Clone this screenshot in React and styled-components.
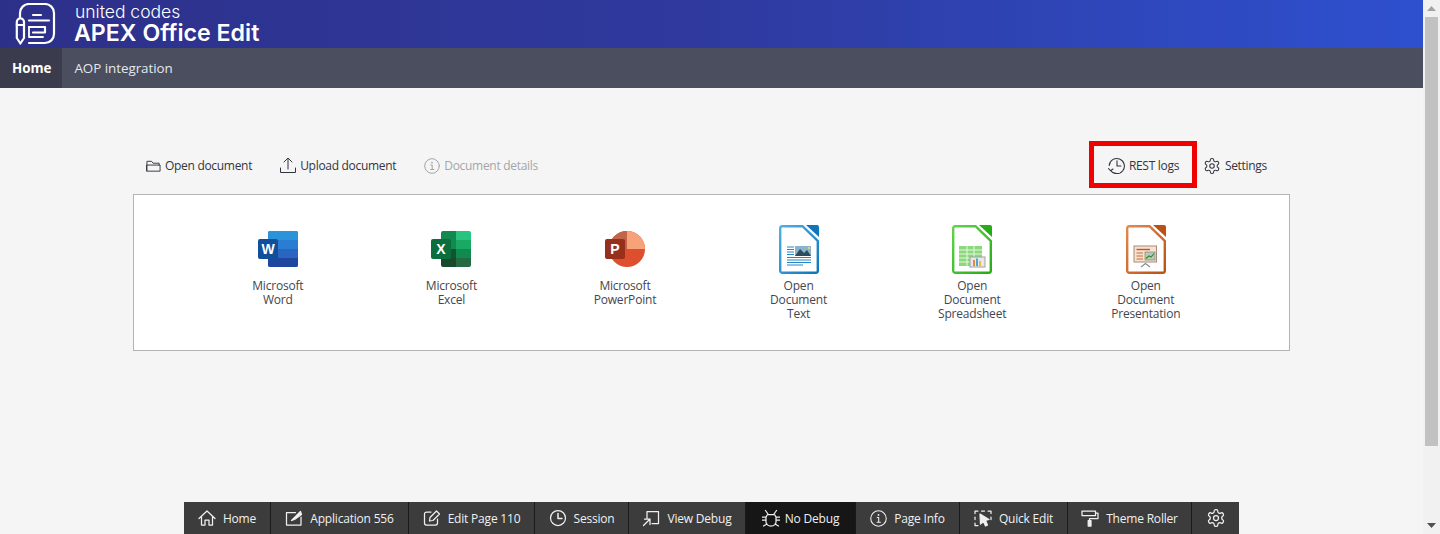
import React from 'react'
import styled, { createGlobalStyle } from 'styled-components'

const Global = createGlobalStyle`
html, body { margin: 0; padding: 0; height: 100%; overflow: hidden; background: #f5f5f5; }
body { font-family: "Open Sans", "Noto Sans", sans-serif; color: #33353e; }
#root { height: 100%; }
`

const Page = styled.div`
  display: flex;
  height: 534px;
`
const Main = styled.div`
  flex: 1;
  min-width: 0;
  display: flex;
  flex-direction: column;
`

/* fake browser scrollbar */
const Scrollbar = styled.div`
  width: 17px;
  background: #f1f1f1;
  display: flex;
  flex-direction: column;
  align-items: center;
  justify-content: space-between;
`
const Arrow = styled.div`
  height: 17px;
  display: flex;
  align-items: center;
  justify-content: center;
`
const Thumb = styled.div`
  width: 13px;
  height: 429px;
  background: #c1c1c1;
  margin-bottom: auto;
`

const Header = styled.header`
  height: 48px;
  background: linear-gradient(90deg, #2d3089 0%, #2f3a9f 50%, #2e50cf 100%);
  display: flex;
  align-items: center;
  padding-left: 15px;
  gap: 17px;
  overflow: hidden;
`
const Brand = styled.div`
  color: #fff;
  display: flex;
  flex-direction: column;
  margin-top: -1px;
`
const BrandTop = styled.div`
  font-family: "Inter", sans-serif;
  font-weight: 300;
  font-size: 17.5px;
  line-height: 19px;
  margin-left: 1px;
  letter-spacing: 0;
`
const BrandName = styled.div`
  font-family: "Inter", sans-serif;
  font-weight: 600;
  font-size: 23.2px;
  line-height: 24px;
`

const Nav = styled.nav`
  height: 40px;
  background: #4a4e5f;
  display: flex;
`
const NavItem = styled.a`
  display: flex;
  align-items: center;
  padding: 0 11px 0 12px;
  font-size: 13.4px;
  letter-spacing: -0.04px;
  color: ${p => (p.$active ? '#fff' : '#e6e7ea')};
  font-weight: ${p => (p.$active ? 700 : 400)};
  background: ${p => (p.$active ? '#3a3b4c' : 'transparent')};
`

const Content = styled.main`
  flex: 1;
  padding: 53px 133px 0;
`
const Toolbar = styled.div`
  display: flex;
  align-items: center;
  height: 47px;
  margin-bottom: 6px;
  padding-left: 13px;
`
const ToolButton = styled.button`
  border: none;
  background: none;
  padding: 2px 0 0;
  margin-right: 28px;
  display: flex;
  align-items: center;
  gap: 4px;
  font-family: inherit;
  font-size: 12px;
  letter-spacing: -0.3px;
  color: ${p => (p.$disabled ? '#a4a5a8' : '#33353e')};
`
const Spacer = styled.div`
  flex: 1;
`
const Highlight = styled.div`
  box-sizing: border-box;
  width: 108px;
  height: 47px;
  border: 5px solid #f00000;
  display: flex;
  align-items: center;
  padding-left: 14px;
  margin-right: 6px;
`
const HighlightedButton = styled(ToolButton)`
  margin-right: 0;
`
const RightButton = styled(ToolButton)`
  margin-right: 23px;
`

const Card = styled.section`
  box-sizing: border-box;
  height: 157px;
  background: #fff;
  border: 1px solid #b4b4b4;
  display: flex;
  padding-left: 57px;
`
const Tile = styled.div`
  width: 173.6px;
  display: flex;
  flex-direction: column;
  align-items: center;
`
const TileIcon = styled.div`
  height: 50px;
  margin-top: 29px;
  display: flex;
  align-items: center;
  justify-content: center;
`
const TileLabel = styled.div`
  margin-top: 5px;
  font-size: 12px;
  line-height: 14px;
  letter-spacing: -0.2px;
  text-align: center;
  white-space: pre-line;
  color: #44464f;
`

const DevBar = styled.div`
  position: fixed;
  left: 184px;
  bottom: 0;
  width: 1055px;
  height: 32px;
  background: #3c3c3c;
  display: flex;
`
const DevItem = styled.div`
  box-sizing: border-box;
  width: ${p => p.$w}px;
  display: flex;
  align-items: center;
  justify-content: center;
  gap: ${p => p.$gap}px;
  color: #f0f0f0;
  font-size: 12px;
  letter-spacing: -0.2px;
  background: ${p => (p.$active ? '#161616' : 'transparent')};
  border-right: 1px solid #1a1a1a;
  &:last-child { border-right: none; }
`

const line = { fill: 'none', stroke: 'currentColor', strokeLinecap: 'round', strokeLinejoin: 'round' }

const Logo = () => (
  <svg width="42" height="42" viewBox="0 0 42 42" style={{ color: '#fff' }}>
    <g {...line} strokeWidth="2.2">
      <path d="M5 14 V10 a9 9 0 0 1 9 -9 H30 a9 9 0 0 1 9 9 V31 a9 9 0 0 1 -9 9 H14" />
      <path d="M18 12 H26" />
      <path d="M14 17.5 H34" />
      <path d="M14 24 H30 V29.5 H18" />
      <path d="M14 24 V34 H28" strokeWidth="1.8" />
      <path d="M1.8 19 a3.6 3.6 0 0 1 7.2 0 V35 L5.4 40.5 L1.8 35 Z" />
      <path d="M1.8 22 H9" />
    </g>
  </svg>
)

const FolderIcon = () => (
  <svg width="15" height="16" viewBox="0 0 16 16">
    <path {...line} d="M1 13 V3 H6 L7.5 5 H14 V7 M1 7 H15 V13.5 H1 Z" />
  </svg>
)
const UploadIcon = () => (
  <svg width="16" height="17" viewBox="0 0 16 17">
    <path {...line} d="M.5 11 V15.5 H15.5 V11 M8 12 V1.5 M4 5 L8 1 L12 5" />
  </svg>
)
const InfoIcon = ({ size = 16 }) => (
  <svg width={size} height={size} viewBox="0 0 16 16">
    <circle {...line} cx="8" cy="8" r="7.3" />
    <path {...line} d="M6.8 7 H8.2 V11.5 M6.6 11.5 H9.8" />
    <circle cx="8" cy="4.6" r=".9" fill="currentColor" />
  </svg>
)
const RestIcon = () => (
  <svg width="17" height="17" viewBox="0 0 17 17">
    <path {...line} strokeWidth="1.1" d="M2.6 13.5 A7.6 7.6 0 1 0 1.2 8.5 M9 3.8 V9 H13 M.5 11.5 L2.5 13.7 L5 12" />
  </svg>
)
const GearIcon = ({ size = 18, weight = 1.4 }) => (
  <svg width={size} height={size} viewBox="0 0 24 24">
    <path {...line} strokeWidth={weight} d="M12.22 2h-.44a2 2 0 0 0-2 2v.18a2 2 0 0 1-1 1.73l-.43.25a2 2 0 0 1-2 0l-.15-.08a2 2 0 0 0-2.73.73l-.22.38a2 2 0 0 0 .73 2.73l.15.1a2 2 0 0 1 1 1.72v.51a2 2 0 0 1-1 1.74l-.15.09a2 2 0 0 0-.73 2.73l.22.38a2 2 0 0 0 2.73.73l.15-.08a2 2 0 0 1 2 0l.43.25a2 2 0 0 1 1 1.73V20a2 2 0 0 0 2 2h.44a2 2 0 0 0 2-2v-.18a2 2 0 0 1 1-1.73l.43-.25a2 2 0 0 1 2 0l.15.08a2 2 0 0 0 2.73-.73l.22-.39a2 2 0 0 0-.73-2.73l-.15-.08a2 2 0 0 1-1-1.74v-.5a2 2 0 0 1 1-1.74l.15-.09a2 2 0 0 0 .73-2.73l-.22-.38a2 2 0 0 0-2.73-.73l-.15.08a2 2 0 0 1-2 0l-.43-.25a2 2 0 0 1-1-1.73V4a2 2 0 0 0-2-2z" />
    <circle {...line} strokeWidth={weight} cx="12" cy="12" r="3" />
  </svg>
)

const WordIcon = () => (
  <svg width="40" height="36" viewBox="0 0 40 36">
    <rect x="10" y="0" width="30" height="36" rx="2" fill="#2b7cd3" />
    <path d="M10 2 a2 2 0 0 1 2 -2 H38 a2 2 0 0 1 2 2 V9 H10 Z" fill="#2b93d9" />
    <rect x="10" y="18" width="30" height="9" fill="#2b65c2" />
    <path d="M10 27 H40 V34 a2 2 0 0 1 -2 2 H12 a2 2 0 0 1 -2 -2 Z" fill="#20479f" />
    <rect x="0" y="8" width="20" height="20" rx="2" fill="#114f9b" />
    <text x="10" y="23" textAnchor="middle" fill="#fff" fontFamily="Liberation Sans" fontWeight="700" fontSize="14">W</text>
  </svg>
)
const ExcelIcon = () => (
  <svg width="40" height="36" viewBox="0 0 40 36">
    <path d="M10 2 a2 2 0 0 1 2 -2 H25 V18 H10 Z" fill="#12894f" />
    <path d="M25 0 H38 a2 2 0 0 1 2 2 V9 H25 Z" fill="#27c37f" />
    <rect x="25" y="9" width="15" height="9" fill="#1aa962" />
    <rect x="25" y="18" width="15" height="9" fill="#118a4f" />
    <path d="M25 27 H40 V34 a2 2 0 0 1 -2 2 H25 Z" fill="#266a42" />
    <rect x="10" y="18" width="15" height="9" fill="#12542f" />
    <path d="M10 27 H25 V36 H12 a2 2 0 0 1 -2 -2 Z" fill="#174a2b" />
    <rect x="0" y="8" width="20" height="20" rx="2" fill="#0c6e3c" />
    <text x="10" y="23" textAnchor="middle" fill="#fff" fontFamily="Liberation Sans" fontWeight="700" fontSize="14">X</text>
  </svg>
)
const PowerPointIcon = () => (
  <svg width="40" height="36" viewBox="0 0 40 36">
    <circle cx="22" cy="18" r="18" fill="#dd4f2d" />
    <path d="M22 0 A18 18 0 0 1 40 18 H22 Z" fill="#f8a27a" />
    <path d="M22 0 A18 18 0 0 0 4 18 H22 Z" fill="#c2644a" />
    <rect x="0" y="8" width="20" height="20" rx="2" fill="#97301b" />
    <text x="10" y="23" textAnchor="middle" fill="#fff" fontFamily="Liberation Sans" fontWeight="700" fontSize="14">P</text>
  </svg>
)

const OdfSheet = ({ id, from, to, children }) => (
  <svg width="40" height="49" viewBox="0 0 40 49">
    <defs>
      <linearGradient id={id} x1="0" y1="0" x2="1" y2="1">
        <stop offset="0" stopColor={from} />
        <stop offset="1" stopColor={to} />
      </linearGradient>
    </defs>
    <path d="M3 1.2 H23.5 L38.8 16 V46 a2 2 0 0 1 -2 1.8 H3 a2 2 0 0 1 -1.8 -1.8 V3 a2 2 0 0 1 1.8 -1.8 Z" fill="#fff" stroke={`url(#${id})`} strokeWidth="2.4" />
    <path d="M27 0 H38 a2 2 0 0 1 2 2 V12 Z" fill={to} />
    {children}
  </svg>
)
const TextDocIcon = () => (
  <OdfSheet id="odt" from="#4fb0e6" to="#0f76bc">
    <g stroke="#2286c8" strokeWidth="1">
      <path d="M8 22 H15 M8 24.5 H15 M8 27 H15 M8 29.5 H15 M8 32.5 H32 M8 35 H32 M8 37.5 H32 M8 40 H24" />
    </g>
    <rect x="16" y="21" width="16" height="10" fill="#8cb3cc" />
    <path d="M16 31 L21 24 L25 28 L28 25 L32 31 Z" fill="#2b4c5c" />
    <circle cx="30" cy="23" r="1.2" fill="#e8d860" />
  </OdfSheet>
)
const SheetDocIcon = () => (
  <OdfSheet id="ods" from="#62d24e" to="#28ac16">
    <rect x="7" y="21" width="23" height="20" fill="#8cd87c" />
    <path d="M7 25 H30 M7 29 H30 M7 33 H30 M7 37 H30 M15 21 V41 M22 21 V41" stroke="#e6f7e2" strokeWidth="1" />
    <rect x="18" y="32" width="15" height="10" fill="#e8e8e8" stroke="#a0a0a0" />
    <rect x="21" y="35" width="2" height="6" fill="#e88a3a" />
    <rect x="24" y="33.5" width="2" height="7.5" fill="#45a8d8" />
    <rect x="27" y="36" width="2" height="5" fill="#e8c040" />
  </OdfSheet>
)
const PresentationIcon = () => (
  <OdfSheet id="odp" from="#e08a50" to="#bc5012">
    <rect x="8" y="21" width="22.5" height="16" fill="#f7e2d2" stroke="#a88a78" />
    <path d="M10.5 24.5 H24" stroke="#c5561a" strokeWidth="1.4" />
    <path d="M10.5 28 H17 M10.5 31 H17 M10.5 34 H17" stroke="#c96a30" strokeWidth="1.1" />
    <rect x="19" y="27" width="10" height="8" fill="#bcc8bc" stroke="#6c7c6c" strokeWidth=".6" />
    <path d="M20 33.5 L23 31 L25 32 L28 28.5" fill="none" stroke="#2f8a26" strokeWidth="1.1" />
    <path d="M15 42 L19.5 38.5 L24 42" fill="none" stroke="#8a8a8a" strokeWidth="1.1" />
  </OdfSheet>
)

const tiles = [
  { label: 'Microsoft\nWord', icon: <WordIcon /> },
  { label: 'Microsoft\nExcel', icon: <ExcelIcon /> },
  { label: 'Microsoft\nPowerPoint', icon: <PowerPointIcon /> },
  { label: 'Open\nDocument\nText', icon: <TextDocIcon /> },
  { label: 'Open\nDocument\nSpreadsheet', icon: <SheetDocIcon /> },
  { label: 'Open\nDocument\nPresentation', icon: <PresentationIcon /> },
]

const Svg18 = ({ children }) => (
  <svg width="18" height="18" viewBox="0 0 18 18">
    <g {...line} strokeWidth="1.25">{children}</g>
  </svg>
)

const devItems = [
  { w: 87, label: 'Home', icon: <Svg18><path d="M1 9.5 L9 2 L17 9.5 M3.5 7.5 V16 H7 V11 H11 V16 H14.5 V7.5" /></Svg18> },
  { w: 138, label: 'Application 556', icon: <Svg18><path d="M16 8 V16 H1.5 V3.5 H10.5" /><path d="M6.5 11.5 L15.5 2.5 L16.5 5.5 L9.5 10.5 Z" fill="currentColor" /></Svg18> },
  { w: 126, label: 'Edit Page 110', icon: <Svg18><path d="M8 3 H3.5 a2 2 0 0 0 -2 2 V14 a2 2 0 0 0 2 2 H12.5 a2 2 0 0 0 2 -2 V10 M6.5 12 L7 8.5 L13.5 2 L16.5 5 L10 11.5 Z" /></Svg18> },
  { w: 94, label: 'Session', icon: <Svg18><circle cx="9" cy="9" r="7.5" /><path d="M9 4.5 V9.5 H13" strokeWidth="1.5" /></Svg18> },
  { w: 117, label: 'View Debug', icon: <Svg18><path d="M5 9 V2.5 H16.5 V14.5 H10 M1.5 16.5 L8 10 M2.5 10 H8 V15.5" /></Svg18> },
  { w: 110, gap: 5, active: true, label: 'No Debug', icon: <Svg18><path d="M5.5 5.5 H12.5 L14 8 V13 a5 4 0 0 1 -10 0 V8 Z M6 5 L3.5 1.5 M12 5 L14.5 1.5 M4 8 H.5 M14 8 H17.5 M4 11 H.5 M14 11 H17.5 M5 15 L1.5 17 M13 15 L16.5 17" /></Svg18> },
  { w: 104, label: 'Page Info', icon: <InfoIcon size={17} /> },
  { w: 108, label: 'Quick Edit', icon: <Svg18><path d="M1 2 H4 M7.5 2 H10.5 M14 2 H17 V4.5 M1 2 V4.5 M1 8 V10.5 M17 8 V10.5 M1 14 V16.5 H4" /><path d="M6 5 L15 10.5 L11.5 11.5 L13.5 16 L11.5 17 L9.5 12.5 L6.5 15 Z" fill="currentColor" /></Svg18> },
  { w: 124, label: 'Theme Roller', icon: <Svg18><path d="M1 2 H14.5 V6.5 H1 Z M14.5 4 H17 V9.5 H8.5 V11.5" /><path d="M7.2 11.5 H10 V17 H7.2 Z" fill="currentColor" /></Svg18> },
  { w: 47, icon: <GearIcon size={20} weight={1.5} /> },
]

export default function App() {
  return (
    <Page>
      <Global />
      <Main>
        <Header>
          <Logo />
          <Brand>
            <BrandTop>united codes</BrandTop>
            <BrandName>APEX Office Edit</BrandName>
          </Brand>
        </Header>
        <Nav>
          <NavItem $active>Home</NavItem>
          <NavItem>AOP integration</NavItem>
        </Nav>
        <Content>
          <Toolbar>
            <ToolButton><FolderIcon />Open document</ToolButton>
            <ToolButton><UploadIcon />Upload document</ToolButton>
            <ToolButton $disabled><InfoIcon />Document details</ToolButton>
            <Spacer />
            <Highlight>
              <HighlightedButton><RestIcon />REST logs</HighlightedButton>
            </Highlight>
            <RightButton><GearIcon />Settings</RightButton>
          </Toolbar>
          <Card>
            {tiles.map(t => (
              <Tile key={t.label}>
                <TileIcon>{t.icon}</TileIcon>
                <TileLabel>{t.label}</TileLabel>
              </Tile>
            ))}
          </Card>
        </Content>
      </Main>
      <Scrollbar>
        <Arrow>
          <svg width="9" height="5" viewBox="0 0 9 5"><path d="M0 5 L4.5 0 L9 5 Z" fill="#a3a3a3" /></svg>
        </Arrow>
        <Thumb />
        <Arrow>
          <svg width="9" height="5" viewBox="0 0 9 5"><path d="M0 0 L4.5 5 L9 0 Z" fill="#505050" /></svg>
        </Arrow>
      </Scrollbar>
      <DevBar>
        {devItems.map((d, i) => (
          <DevItem key={i} $w={d.w} $gap={d.gap || 7} $active={d.active}>
            {d.icon}
            {d.label && <span>{d.label}</span>}
          </DevItem>
        ))}
      </DevBar>
    </Page>
  )
}
